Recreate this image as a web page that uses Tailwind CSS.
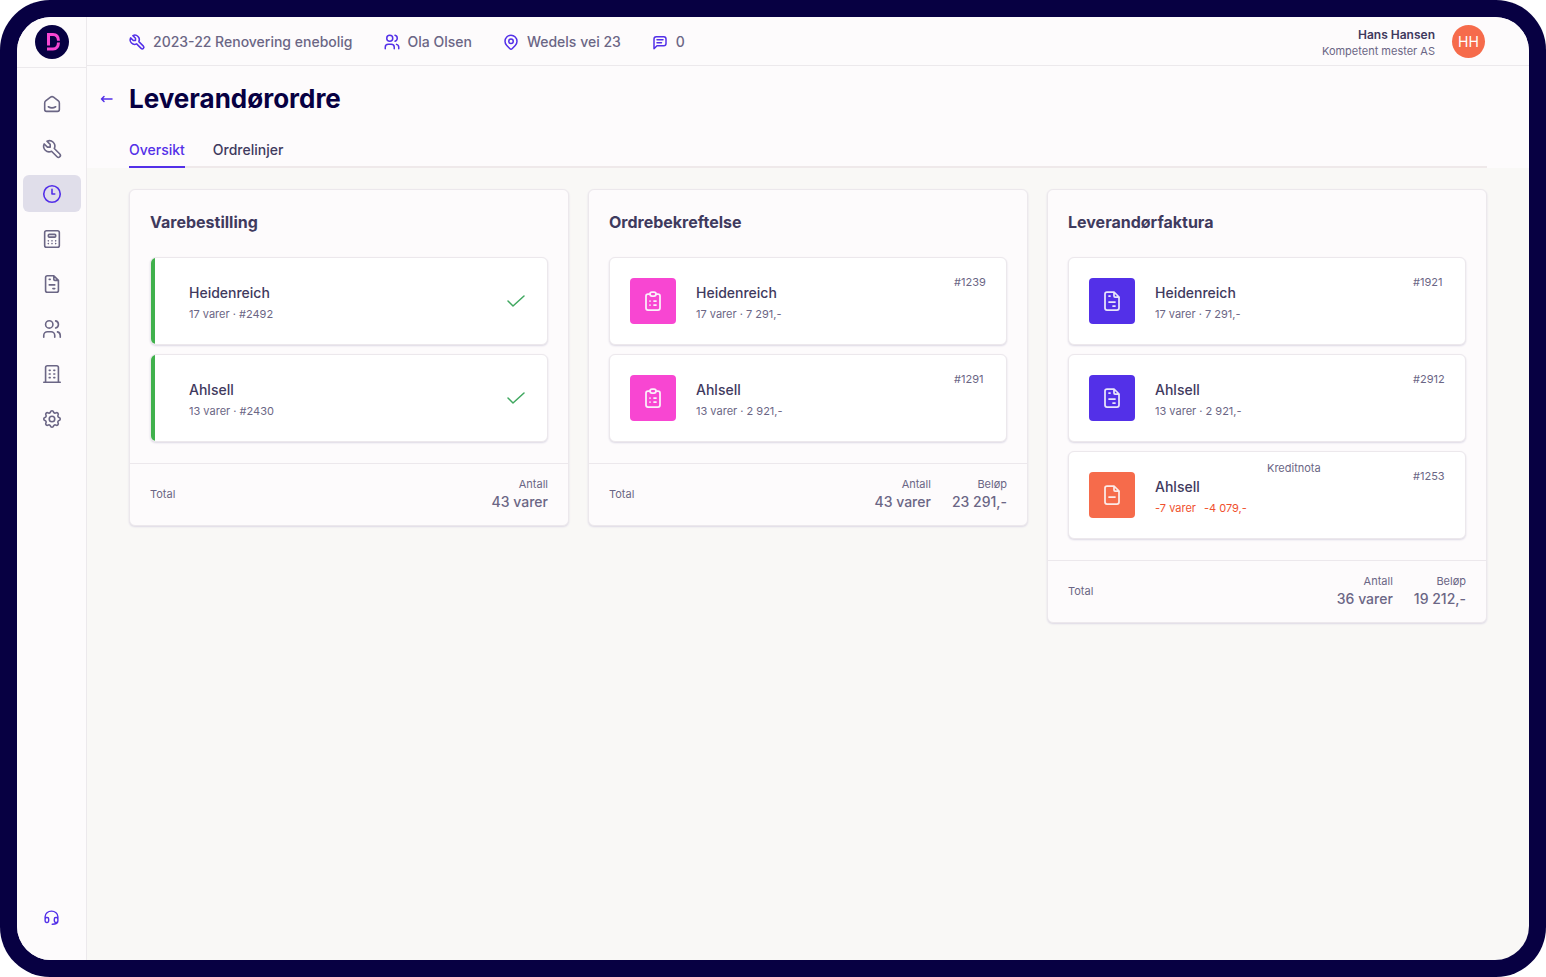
<!DOCTYPE html>
<html lang="no">
<head>
<meta charset="utf-8">
<meta name="viewport" content="width=device-width, initial-scale=1">
<title>Leverandørordre</title>
<script src="https://cdn.jsdelivr.net/npm/@tailwindcss/browser@4"></script>
</head>
<body class="bg-white font-['Inter',sans-serif] text-sm text-[#6b6685]">
<svg class="hidden" aria-hidden="true">
  <symbol id="home" viewBox="0 0 24 24"><path d="M19 8.71l-5.333-4.148a2.666 2.666 0 0 0-3.274 0L5.059 8.71a2.665 2.665 0 0 0-1.029 2.105v7.2a2 2 0 0 0 2 2h12a2 2 0 0 0 2-2v-7.2c0-.823-.38-1.6-1.03-2.105M16 15c-2.21 1.333-5.792 1.333-8 0"/></symbol>
  <symbol id="tool" viewBox="0 0 24 24"><path d="M7 10h3V7L6.500 3.500a6 6 0 0 1 8 8l6 6a2 2 0 0 1-3 3l-6-6a6 6 0 0 1-8-8L7 10"/></symbol>
  <symbol id="clock" viewBox="0 0 24 24"><circle cx="12" cy="12" r="9"/><path d="M12 7v5h3"/></symbol>
  <symbol id="calculator" viewBox="0 0 24 24"><rect x="4" y="3" width="16" height="18" rx="2"/><rect x="8" y="7" width="8" height="3" rx="1"/><path d="M8 14v.01M12 14v.01M16 14v.01M8 17v.01M12 17v.01M16 17v.01"/></symbol>
  <symbol id="invoice" viewBox="0 0 24 24"><path d="M14 3v4a1 1 0 0 0 1 1h4M17 21H7a2 2 0 0 1-2-2V5a2 2 0 0 1 2-2h7l5 5v11a2 2 0 0 1-2 2zM9 7h1M9 13h6M13 17h2"/></symbol>
  <symbol id="file-minus" viewBox="0 0 24 24"><path d="M14 3v4a1 1 0 0 0 1 1h4M17 21H7a2 2 0 0 1-2-2V5a2 2 0 0 1 2-2h7l5 5v11a2 2 0 0 1-2 2zM9 14h6"/></symbol>
  <symbol id="users" viewBox="0 0 24 24"><circle cx="9" cy="7" r="4"/><path d="M3 21v-2a4 4 0 0 1 4-4h4a4 4 0 0 1 4 4v2M16 3.130a4 4 0 0 1 0 7.750M21 21v-2a4 4 0 0 0-3-3.850"/></symbol>
  <symbol id="building" viewBox="0 0 24 24"><path d="M3 21h18M9 8h1M9 12h1M9 16h1M14 8h1M14 12h1M14 16h1M5 21V5a2 2 0 0 1 2-2h10a2 2 0 0 1 2 2v16"/></symbol>
  <symbol id="settings" viewBox="0 0 24 24"><path d="M10.325 4.317c.426-1.756 2.924-1.756 3.350 0a1.724 1.724 0 0 0 2.573 1.066c1.543-.94 3.310.826 2.370 2.370a1.724 1.724 0 0 0 1.065 2.572c1.756.426 1.756 2.924 0 3.350a1.724 1.724 0 0 0-1.066 2.573c.94 1.543-.826 3.310-2.370 2.370a1.724 1.724 0 0 0-2.572 1.065c-.426 1.756-2.924 1.756-3.350 0a1.724 1.724 0 0 0-2.573-1.066c-1.543.94-3.310-.826-2.370-2.370a1.724 1.724 0 0 0-1.065-2.572c-1.756-.426-1.756-2.924 0-3.350a1.724 1.724 0 0 0 1.066-2.573c-.94-1.543.826-3.310 2.370-2.370 1 .608 2.296.07 2.572-1.065z"/><circle cx="12" cy="12" r="3"/></symbol>
  <symbol id="headset" viewBox="0 0 24 24"><path d="M3 14v-3a9 8 0 1 1 18 0v3M21 17c0 2.800-3 4.500-8 4.500M3 14a2 2 0 0 1 2-2h1a2 2 0 0 1 2 2v3a2 2 0 0 1-2 2H5a2 2 0 0 1-2-2v-3zM16 14a2 2 0 0 1 2-2h1a2 2 0 0 1 2 2v3a2 2 0 0 1-2 2h-1a2 2 0 0 1-2-2v-3z"/></symbol>
  <symbol id="pin" viewBox="0 0 24 24"><circle cx="12" cy="11" r="3"/><path d="M17.657 16.657L13.414 20.900a2 2 0 0 1-2.827 0l-4.244-4.243a8 8 0 1 1 11.314 0z"/></symbol>
  <symbol id="message" viewBox="0 0 24 24"><path d="M4 21V8a3 3 0 0 1 3-3h10a3 3 0 0 1 3 3v6a3 3 0 0 1-3 3H8l-4 4M8 9h8M8 13h6"/></symbol>
  <symbol id="clipboard" viewBox="0 0 24 24"><path d="M9 5H7a2 2 0 0 0-2 2v12a2 2 0 0 0 2 2h10a2 2 0 0 0 2-2V7a2 2 0 0 0-2-2h-2"/><rect x="9" y="3" width="6" height="4" rx="2"/><path d="M9 12h.01M13 12h2M9 16h.01M13 16h2"/></symbol>
</svg>

<div class="flex min-h-screen rounded-[50px] bg-[#070042] p-[17px]">
  <div class="flex flex-1 overflow-hidden rounded-[34px] bg-[#f9f8f6]">

    <aside class="flex w-[70px] shrink-0 flex-col border-r border-[#ece9ec] bg-[#fdfbfc]">
      <a href="#" aria-label="Forside" class="flex h-[51px] items-center justify-center border-b border-[#ece9ec]">
        <svg class="size-[34px]" viewBox="0 0 34 34"><circle cx="17" cy="17" r="17" fill="#070042"/><g fill="none" stroke="#f846d2" stroke-width="3"><path d="M13.500 20.500V9.500H18q5.300 0 5.500 6.300"/><path d="M23.500 17.500q-.3 6.500-5.500 6.500H12"/></g></svg>
      </a>
      <nav aria-label="Hovedmeny" class="flex flex-1 flex-col items-center gap-2 pt-[17px] pb-6">
        <a href="#" aria-label="Hjem" class="flex h-[37px] w-[58px] items-center justify-center rounded-md"><svg class="size-[22px] fill-none stroke-current stroke-[1.75] [stroke-linecap:round] [stroke-linejoin:round]"><use href="#home"/></svg></a>
        <a href="#" aria-label="Prosjekter" class="flex h-[37px] w-[58px] items-center justify-center rounded-md"><svg class="size-[22px] fill-none stroke-current stroke-[1.75] [stroke-linecap:round] [stroke-linejoin:round]"><use href="#tool"/></svg></a>
        <a href="#" aria-label="Timer" aria-current="page" class="flex h-[37px] w-[58px] items-center justify-center rounded-md bg-[#e0deea] text-[#5330e8]"><svg class="size-[22px] fill-none stroke-current stroke-[1.75] [stroke-linecap:round] [stroke-linejoin:round]"><use href="#clock"/></svg></a>
        <a href="#" aria-label="Kalkyle" class="flex h-[37px] w-[58px] items-center justify-center rounded-md"><svg class="size-[22px] fill-none stroke-current stroke-[1.75] [stroke-linecap:round] [stroke-linejoin:round]"><use href="#calculator"/></svg></a>
        <a href="#" aria-label="Faktura" class="flex h-[37px] w-[58px] items-center justify-center rounded-md"><svg class="size-[22px] fill-none stroke-current stroke-[1.75] [stroke-linecap:round] [stroke-linejoin:round]"><use href="#invoice"/></svg></a>
        <a href="#" aria-label="Kunder" class="flex h-[37px] w-[58px] items-center justify-center rounded-md"><svg class="size-[22px] fill-none stroke-current stroke-[1.75] [stroke-linecap:round] [stroke-linejoin:round]"><use href="#users"/></svg></a>
        <a href="#" aria-label="Bedrift" class="flex h-[37px] w-[58px] items-center justify-center rounded-md"><svg class="size-[22px] fill-none stroke-current stroke-[1.75] [stroke-linecap:round] [stroke-linejoin:round]"><use href="#building"/></svg></a>
        <a href="#" aria-label="Innstillinger" class="flex h-[37px] w-[58px] items-center justify-center rounded-md"><svg class="size-[22px] fill-none stroke-current stroke-[1.75] [stroke-linecap:round] [stroke-linejoin:round]"><use href="#settings"/></svg></a>
        <a href="#" aria-label="Kundestøtte" class="mt-auto flex h-[37px] w-[58px] items-center justify-center rounded-md text-[#5330e8]"><svg class="size-[17px] fill-none stroke-current stroke-2 [stroke-linecap:round] [stroke-linejoin:round]"><use href="#headset"/></svg></a>
      </nav>
    </aside>

    <div class="min-w-0 flex-1">
      <header class="flex h-[49px] items-center justify-between border-b border-[#ece9ec] bg-[#fdfbfc] pr-[44px] pl-[41px]">
        <ul class="flex items-center gap-[30px] pt-0.5 font-medium">
          <li class="flex items-center gap-[7px]"><svg class="size-[18px] fill-none stroke-[#5330e8] stroke-2 [stroke-linecap:round] [stroke-linejoin:round]" aria-hidden="true"><use href="#tool"/></svg>2023-22 Renovering enebolig</li>
          <li class="flex items-center gap-[7px]"><svg class="size-[18px] fill-none stroke-[#5330e8] stroke-2 [stroke-linecap:round] [stroke-linejoin:round]" aria-hidden="true"><use href="#users"/></svg>Ola Olsen</li>
          <li class="flex items-center gap-[7px]"><svg class="size-[18px] fill-none stroke-[#5330e8] stroke-2 [stroke-linecap:round] [stroke-linejoin:round]" aria-hidden="true"><use href="#pin"/></svg>Wedels vei 23</li>
          <li class="flex items-center gap-[7px]"><svg class="size-[18px] fill-none stroke-[#5330e8] stroke-2 [stroke-linecap:round] [stroke-linejoin:round]" aria-hidden="true"><use href="#message"/></svg>0</li>
        </ul>
        <div class="flex items-center gap-[17px]">
          <div class="pt-0.5 text-right">
            <p class="text-[12px] leading-[17px] font-semibold text-[#3f3a5e]">Hans Hansen</p>
            <p class="text-[11px] leading-4">Kompetent mester AS</p>
          </div>
          <button type="button" aria-label="Hans Hansen, konto" class="size-[33px] rounded-full bg-[#f66b4b] pt-0.5 text-sm text-white">HH</button>
        </div>
      </header>

      <div class="bg-[#fdfbfc] pt-[15px] pr-[42px]">
        <div class="flex items-center">
          <a href="#" aria-label="Tilbake" class="w-[42px] shrink-0 pl-[13px]"><svg class="h-3 w-[13px] fill-none stroke-[#5330e8] stroke-[1.5] [stroke-linecap:round] [stroke-linejoin:round]" viewBox="0 0 13 12"><path d="M12 6H1.500M4 3.500L1.500 6L4 8.500"/></svg></a>
          <h1 class="text-[26px] leading-9 font-bold text-[#070042]">Leverandørordre</h1>
        </div>
        <nav aria-label="Visning" class="mt-[23px] ml-[42px] flex gap-7 font-medium text-[#3f3a5e] shadow-[inset_0_-2px_#efe9ea]">
          <a href="#" aria-current="page" class="border-b-2 border-[#5330e8] pb-[6px] text-[#5330e8]">Oversikt</a>
          <a href="#" class="border-b-2 border-transparent pb-[6px]">Ordrelinjer</a>
        </nav>
      </div>

      <main class="grid grid-cols-3 items-start gap-[19px] px-[42px] py-[21px]">
        <section class="rounded-md border border-[#ece8ec] bg-[#fdfbfc] shadow-[0_1px_2px_#dcd8e4]">
          <div class="px-5 pt-5 pb-[21px]">
            <h2 class="text-base font-bold text-[#3f3a5e]">Varebestilling</h2>
            <ul class="mt-[23px] flex flex-col gap-[9px]">
              <li class="flex h-[88px] items-center overflow-hidden rounded-md border border-[#ece8ec] bg-white shadow-[0_1px_2px_#dcd8e4]">
                <span class="w-1 self-stretch bg-[#40b14c]"></span>
                <div class="mt-0.5 flex-1 pl-[34px]">
                  <h3 class="text-sm leading-6 font-medium text-[#3f3a5e]">Heidenreich</h3>
                  <p class="text-[11px] leading-[18px]">17 varer · #2492</p>
                </div>
                <svg class="mr-[22px] h-3 w-[18px] fill-none stroke-[#40a860] stroke-[1.5] [stroke-linecap:round] [stroke-linejoin:round]" viewBox="0 0 18 12" role="img" aria-label="Bekreftet"><path d="M1 6l5 5L17 1"/></svg>
              </li>
              <li class="flex h-[88px] items-center overflow-hidden rounded-md border border-[#ece8ec] bg-white shadow-[0_1px_2px_#dcd8e4]">
                <span class="w-1 self-stretch bg-[#40b14c]"></span>
                <div class="mt-0.5 flex-1 pl-[34px]">
                  <h3 class="text-sm leading-6 font-medium text-[#3f3a5e]">Ahlsell</h3>
                  <p class="text-[11px] leading-[18px]">13 varer · #2430</p>
                </div>
                <svg class="mr-[22px] h-3 w-[18px] fill-none stroke-[#40a860] stroke-[1.5] [stroke-linecap:round] [stroke-linejoin:round]" viewBox="0 0 18 12" role="img" aria-label="Bekreftet"><path d="M1 6l5 5L17 1"/></svg>
              </li>
            </ul>
          </div>
          <footer class="flex items-center border-t border-[#ece8ec] px-5 pt-3 pb-[13px] text-right text-[11px] leading-4">
            <span class="mr-auto">Total</span>
            <p>Antall<span class="block text-sm font-medium">43 varer</span></p>
          </footer>
        </section>

        <section class="rounded-md border border-[#ece8ec] bg-[#fdfbfc] shadow-[0_1px_2px_#dcd8e4]">
          <div class="px-5 pt-5 pb-[21px]">
            <h2 class="text-base font-bold text-[#3f3a5e]">Ordrebekreftelse</h2>
            <ul class="mt-[23px] flex flex-col gap-[9px]">
              <li class="flex h-[88px] items-center gap-5 rounded-md border border-[#ece8ec] bg-white px-5 shadow-[0_1px_2px_#dcd8e4]">
                <span class="flex size-[46px] items-center justify-center rounded-sm bg-[#f846d2]"><svg class="size-6 fill-none stroke-[#fbeffa] stroke-[1.75] [stroke-linecap:round] [stroke-linejoin:round]" aria-hidden="true"><use href="#clipboard"/></svg></span>
                <div class="mt-0.5 flex-1">
                  <h3 class="text-sm leading-6 font-medium text-[#3f3a5e]">Heidenreich</h3>
                  <p class="text-[11px] leading-[18px]">17 varer · 7 291,-</p>
                </div>
                <span class="mt-[15px] w-8 self-start text-[11px] leading-[18px]">#1239</span>
              </li>
              <li class="flex h-[88px] items-center gap-5 rounded-md border border-[#ece8ec] bg-white px-5 shadow-[0_1px_2px_#dcd8e4]">
                <span class="flex size-[46px] items-center justify-center rounded-sm bg-[#f846d2]"><svg class="size-6 fill-none stroke-[#fbeffa] stroke-[1.75] [stroke-linecap:round] [stroke-linejoin:round]" aria-hidden="true"><use href="#clipboard"/></svg></span>
                <div class="mt-0.5 flex-1">
                  <h3 class="text-sm leading-6 font-medium text-[#3f3a5e]">Ahlsell</h3>
                  <p class="text-[11px] leading-[18px]">13 varer · 2 921,-</p>
                </div>
                <span class="mt-[15px] w-8 self-start text-[11px] leading-[18px]">#1291</span>
              </li>
            </ul>
          </div>
          <footer class="flex items-center gap-[21px] border-t border-[#ece8ec] px-5 pt-3 pb-[13px] text-right text-[11px] leading-4">
            <span class="mr-auto">Total</span>
            <p>Antall<span class="block text-sm font-medium">43 varer</span></p>
            <p>Beløp<span class="block text-sm font-medium">23 291,-</span></p>
          </footer>
        </section>

        <section class="rounded-md border border-[#ece8ec] bg-[#fdfbfc] shadow-[0_1px_2px_#dcd8e4]">
          <div class="px-5 pt-5 pb-[21px]">
            <h2 class="text-base font-bold text-[#3f3a5e]">Leverandørfaktura</h2>
            <ul class="mt-[23px] flex flex-col gap-[9px]">
              <li class="flex h-[88px] items-center gap-5 rounded-md border border-[#ece8ec] bg-white px-5 shadow-[0_1px_2px_#dcd8e4]">
                <span class="flex size-[46px] items-center justify-center rounded-sm bg-[#5330e8]"><svg class="size-6 fill-none stroke-[#e8e4fa] stroke-[1.75] [stroke-linecap:round] [stroke-linejoin:round]" aria-hidden="true"><use href="#invoice"/></svg></span>
                <div class="mt-0.5 flex-1">
                  <h3 class="text-sm leading-6 font-medium text-[#3f3a5e]">Heidenreich</h3>
                  <p class="text-[11px] leading-[18px]">17 varer · 7 291,-</p>
                </div>
                <span class="mt-[15px] w-8 self-start text-[11px] leading-[18px]">#1921</span>
              </li>
              <li class="flex h-[88px] items-center gap-5 rounded-md border border-[#ece8ec] bg-white px-5 shadow-[0_1px_2px_#dcd8e4]">
                <span class="flex size-[46px] items-center justify-center rounded-sm bg-[#5330e8]"><svg class="size-6 fill-none stroke-[#e8e4fa] stroke-[1.75] [stroke-linecap:round] [stroke-linejoin:round]" aria-hidden="true"><use href="#invoice"/></svg></span>
                <div class="mt-0.5 flex-1">
                  <h3 class="text-sm leading-6 font-medium text-[#3f3a5e]">Ahlsell</h3>
                  <p class="text-[11px] leading-[18px]">13 varer · 2 921,-</p>
                </div>
                <span class="mt-[15px] w-8 self-start text-[11px] leading-[18px]">#2912</span>
              </li>
              <li class="relative flex h-[88px] items-center gap-5 rounded-md border border-[#ece8ec] bg-white px-5 shadow-[0_1px_2px_#dcd8e4]">
                <span class="flex size-[46px] items-center justify-center rounded-sm bg-[#f66b4b]"><svg class="size-6 fill-none stroke-[#fbeae8] stroke-[1.75] [stroke-linecap:round] [stroke-linejoin:round]" aria-hidden="true"><use href="#file-minus"/></svg></span>
                <div class="mt-0.5 flex-1">
                  <h3 class="text-sm leading-6 font-medium text-[#3f3a5e]">Ahlsell</h3>
                  <p class="flex gap-2 text-[11px] leading-[18px] text-[#f0502e]"><span>-7 varer</span><span>-4 079,-</span></p>
                </div>
                <span class="absolute top-2 left-1/2 text-[11px] leading-4">Kreditnota</span>
                <span class="mt-[15px] w-8 self-start text-[11px] leading-[18px]">#1253</span>
              </li>
            </ul>
          </div>
          <footer class="flex items-center gap-[21px] border-t border-[#ece8ec] px-5 pt-3 pb-[13px] text-right text-[11px] leading-4">
            <span class="mr-auto">Total</span>
            <p>Antall<span class="block text-sm font-medium">36 varer</span></p>
            <p>Beløp<span class="block text-sm font-medium">19 212,-</span></p>
          </footer>
        </section>
      </main>
    </div>
  </div>
</div>
</body>
</html>
